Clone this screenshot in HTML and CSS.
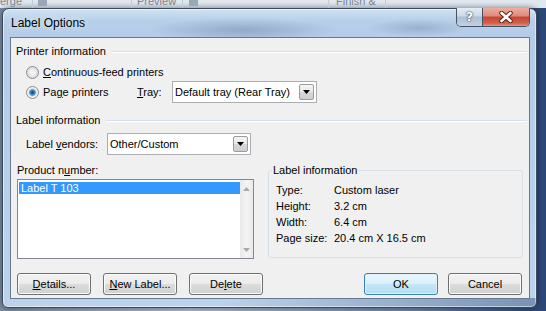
FILE: index.html
```html
<!DOCTYPE html>
<html lang="en">
<head>
    <meta charset="UTF-8">
    <title>Label Options</title>
    <link rel="stylesheet" href="styles.css">
</head>
<body>
    <!-- Word ribbon peeking out behind the dialog -->
    <div class="ribbon">
        <span class="rb-item rb-merge">erge</span>
        <span class="rb-item rb-wide"><i class="rb-icon"></i></span>
        <span class="rb-item rb-preview">Preview</span>
        <span class="rb-item rb-wide2"><i class="rb-icon"></i></span>
        <span class="rb-item rb-finish">Finish &amp;</span>
    </div>

    <div class="window">
        <div class="titlebar">
            <span class="title">Label Options</span>
            <div class="caption-buttons">
                <span class="cap-help">?</span>
                <span class="cap-close">
                    <svg width="16" height="12" viewBox="0 0 16 12">
                        <path d="M3.5 2 L12.5 10 M12.5 2 L3.5 10" stroke="#5a1c12" stroke-width="4.4" stroke-linecap="round"/>
                        <path d="M3.5 2 L12.5 10 M12.5 2 L3.5 10" stroke="#fff" stroke-width="2.6" stroke-linecap="round"/>
                    </svg>
                </span>
            </div>
        </div>

        <div class="client">
            <div class="group-heading">Printer information</div>
            <div class="radio-row">
                <span class="radio"></span>
                <span><u>C</u>ontinuous-feed printers</span>
            </div>
            <div class="radio-row tray-row">
                <span class="radio-opt"><span class="radio checked"></span>Pa<u>g</u>e printers</span>
                <span class="tray-label"><u>T</u>ray:</span>
                <div class="combo tray-combo">
                    <span>Default tray (Rear Tray)</span>
                    <span class="combo-btn"><svg width="7" height="4" viewBox="0 0 7 4"><path d="M0 0h7l-3.5 4z" fill="#000"/></svg></span>
                </div>
            </div>

            <div class="group-heading heading-2">Label information</div>
            <div class="vendor-row">
                <span class="vendor-label">Label <u>v</u>endors:</span>
                <div class="combo vendor-combo">
                    <span>Other/Custom</span>
                    <span class="combo-btn"><svg width="7" height="4" viewBox="0 0 7 4"><path d="M0 0h7l-3.5 4z" fill="#000"/></svg></span>
                </div>
            </div>

            <div class="lower">
                <div class="product">
                    <div class="product-label">Product n<u>u</u>mber:</div>
                    <div class="listbox">
                        <div class="list-items">
                            <div class="list-item selected">Label T 103</div>
                        </div>
                        <div class="scrollbar">
                            <span class="sb-btn"><svg width="7" height="4" viewBox="0 0 7 4"><path d="M0 4h7l-3.5-4z" fill="#a9a9a9"/></svg></span>
                            <span class="sb-btn"><svg width="7" height="4" viewBox="0 0 7 4"><path d="M0 0h7l-3.5 4z" fill="#a9a9a9"/></svg></span>
                        </div>
                    </div>
                </div>

                <fieldset class="info-panel">
                    <legend>Label information</legend>
                    <div class="info-grid">
                        <span>Type:</span><span>Custom laser</span>
                        <span>Height:</span><span>3.2 cm</span>
                        <span>Width:</span><span>6.4 cm</span>
                        <span>Page size:</span><span>20.4 cm X 16.5 cm</span>
                    </div>
                </fieldset>
            </div>

            <div class="button-row">
                <div class="button-group">
                    <button type="button"><u>D</u>etails...</button>
                    <button type="button"><u>N</u>ew Label...</button>
                    <button type="button">De<u>l</u>ete</button>
                </div>
                <div class="button-group right">
                    <button type="button" class="default">OK</button>
                    <button type="button">Cancel</button>
                </div>
            </div>
        </div>
    </div>
</body>
</html>
```
FILE: styles.css
```css
* {
    box-sizing: border-box;
}
html, body {
    margin: 0;
}
body {
    width: 546px;
    height: 311px;
    overflow: hidden;
    font: 11px "Liberation Sans", Arial, sans-serif;
    color: #000;
    background: linear-gradient(to right, #7d8ea3 0, #b3c0ce 35%, #6f88ab 75%, #2a4777 100%);
}
u {
    text-decoration-thickness: 1px;
    text-underline-offset: 1px;
}

/* ribbon behind */
.ribbon {
    display: flex;
    height: 8px;
    overflow: hidden;
    background: #e1e8f0;
    color: #7a8592;
    line-height: 11px;
}
.rb-item {
    height: 16px;
    margin-top: -4px;
    border-right: 1px solid #c2ccd7;
    white-space: nowrap;
}
.rb-merge { width: 33px; }
.rb-wide { width: 99px; padding: 4px 0 0 5px; }
.rb-preview { width: 51px; padding-left: 5px; }
.rb-wide2 { width: 146px; padding: 4px 0 0 6px; }
.rb-finish { width: 57px; padding-left: 7px; }
.rb-icon {
    display: block;
    width: 9px;
    height: 6px;
    background: #9aa7b6;
}

/* window frame */
.window {
    margin-left: 2px;
    width: 535px;
    height: 300px;
    border: 1px solid #3b4c61;
    border-radius: 7px 7px 6px 6px;
    padding: 0 6px 8px 7px;
    display: flex;
    flex-direction: column;
    background:
        radial-gradient(ellipse 95px 12px at 240px 21px, rgba(80, 104, 138, .35), rgba(80, 104, 138, 0)),
        radial-gradient(ellipse 50px 9px at 415px 19px, rgba(80, 104, 138, .28), rgba(80, 104, 138, 0)),
        linear-gradient(to right, rgba(40, 70, 115, 0) 40%, rgba(40, 70, 115, .45) 100%) bottom / 100% 9px no-repeat,
        linear-gradient(to bottom, #d2e2f2 0, #b7cfe9 12px, #b4cce7 30px, #bdd3eb 100%);
    box-shadow: 0 0 6px rgba(0, 0, 0, .5), inset 0 0 0 1px rgba(255, 255, 255, .5);
}
.titlebar {
    height: 28px;
    display: flex;
    justify-content: space-between;
    padding-left: 1px;
}
.title {
    align-self: center;
    font-size: 12px;
    line-height: 14px;
    color: #000;
    text-shadow: 0 0 6px rgba(255, 255, 255, .9);
}
.caption-buttons {
    display: flex;
    height: 19px;
    margin-top: -1px;
    border: 1px solid #435468;
    border-top: 0;
    border-radius: 0 0 5px 5px;
    overflow: hidden;
}
.cap-help {
    width: 26px;
    border-right: 1px solid #435468;
    background: linear-gradient(#e4ecf5 0, #ccd9e7 45%, #aebfd3 50%, #c2d1e2 100%);
    color: #fff;
    font: bold 13px/18px "DejaVu Sans", sans-serif;
    text-align: center;
    text-shadow: 0 0 1px #29394c, 0 0 2px #29394c;
}
.cap-close {
    width: 46px;
    display: flex;
    align-items: center;
    justify-content: center;
    background: linear-gradient(#ecaea2 0, #dc8a79 45%, #c8432e 50%, #d1634c 85%, #e39682 100%);
}

/* client area */
.client {
    height: 262px;
    border: 1px solid #66798f;
    background: #f0f0f0;
    padding: 6px 7px 3px 5px;
    line-height: 14px;
}
.group-heading {
    display: flex;
    align-items: center;
    height: 14px;
    margin-right: -5px;
}
.group-heading::after {
    content: "";
    flex: 1;
    height: 1px;
    margin-left: 6px;
    background: #d5dfe5;
    box-shadow: 0 1px 0 #fff;
}
.heading-2 {
    margin-top: 10px;
}
.radio-row {
    display: flex;
    align-items: center;
    height: 16px;
    margin-top: 6px;
    padding-left: 10px;
}
.tray-row {
    height: 22px;
    margin-top: 1px;
}
.radio-opt {
    display: flex;
    align-items: center;
    width: 111px;
}
.radio {
    width: 13px;
    height: 13px;
    margin-right: 4px;
    border: 1px solid #8b8d8f;
    border-radius: 50%;
    background: radial-gradient(circle at 50% 50%, #f9f9f9 0, #eeeeee 3px, #dadada 5px, #f6f6f6 6px);
}
.radio.checked {
    background: radial-gradient(circle at 50% 50%, #123f6e 0, #2b6aa3 1.5px, #5ea6da 3px, #a9d4f1 3.6px, #eeeeee 4.2px, #f6f6f6 6px);
}
.tray-label {
    width: 35px;
}
.combo {
    height: 22px;
    border: 1px solid #abadb3;
    background: #fff;
    display: flex;
    align-items: center;
    justify-content: space-between;
    padding: 0 2px 0 2px;
}
.tray-combo {
    width: 145px;
}
.vendor-row {
    display: flex;
    align-items: center;
    height: 22px;
    margin-top: 6px;
    padding-left: 10px;
}
.vendor-label {
    width: 81px;
}
.vendor-combo {
    width: 144px;
}
.combo-btn {
    width: 15px;
    height: 16px;
    border: 1px solid #9a9ca0;
    border-radius: 2px;
    background: linear-gradient(#f5f5f5 0, #e8e8e8 50%, #d7d7d7 51%, #cecece 100%);
    display: flex;
    align-items: center;
    justify-content: center;
}

/* product list + label info */
.lower {
    display: flex;
    margin-top: 8px;
    padding-left: 1px;
    height: 96px;
}
.product {
    width: 237px;
    flex-shrink: 0;
}
.product-label {
    height: 14px;
    margin-bottom: 2px;
}
.listbox {
    height: 80px;
    border: 1px solid #828790;
    background: #fff;
    display: flex;
}
.list-items {
    flex: 1;
    padding: 2px 0 0 1px;
}
.list-item {
    height: 12px;
    line-height: 12px;
    padding-left: 2px;
}
.list-item.selected {
    background: #3399ff;
    color: #fff;
}
.scrollbar {
    width: 13px;
    background: linear-gradient(to right, #e9e9e9, #f4f4f4 50%, #e9e9e9);
    display: flex;
    flex-direction: column;
    justify-content: space-between;
}
.sb-btn {
    height: 17px;
    display: flex;
    align-items: center;
    justify-content: center;
}
.info-panel {
    width: 255px;
    height: 95px;
    flex-shrink: 0;
    margin: 0 0 0 14px;
    padding: 5px 0 0 7px;
    border: 1px solid #d5dfe5;
    border-radius: 3px;
    min-width: 0;
}
.info-panel legend {
    padding: 0 1px;
    margin-left: -4px;
    line-height: 14px;
}
.info-grid {
    display: grid;
    grid-template-columns: 58px auto;
    line-height: 16px;
}

/* buttons */
.button-row {
    display: flex;
    justify-content: space-between;
    margin-top: 14px;
    padding-left: 1px;
}
.button-group {
    display: flex;
    gap: 12px;
}
.button-group.right {
    gap: 10px;
}
button {
    width: 74px;
    height: 22px;
    padding: 0;
    font: 11px "Liberation Sans", Arial, sans-serif;
    color: #000;
    border: 1px solid #707070;
    border-radius: 3px;
    background: linear-gradient(#f2f2f2 0, #ebebeb 50%, #dddddd 51%, #cfcfcf 100%);
    box-shadow: inset 0 0 0 1px #fbfbfb;
}
button.default {
    border-color: #3c7fb1;
    background: linear-gradient(#eaf6fd 0, #d9f0fc 50%, #c4e5f6 51%, #b4ddf3 100%);
    box-shadow: inset 0 0 0 1px #e0f1fb;
}
```
